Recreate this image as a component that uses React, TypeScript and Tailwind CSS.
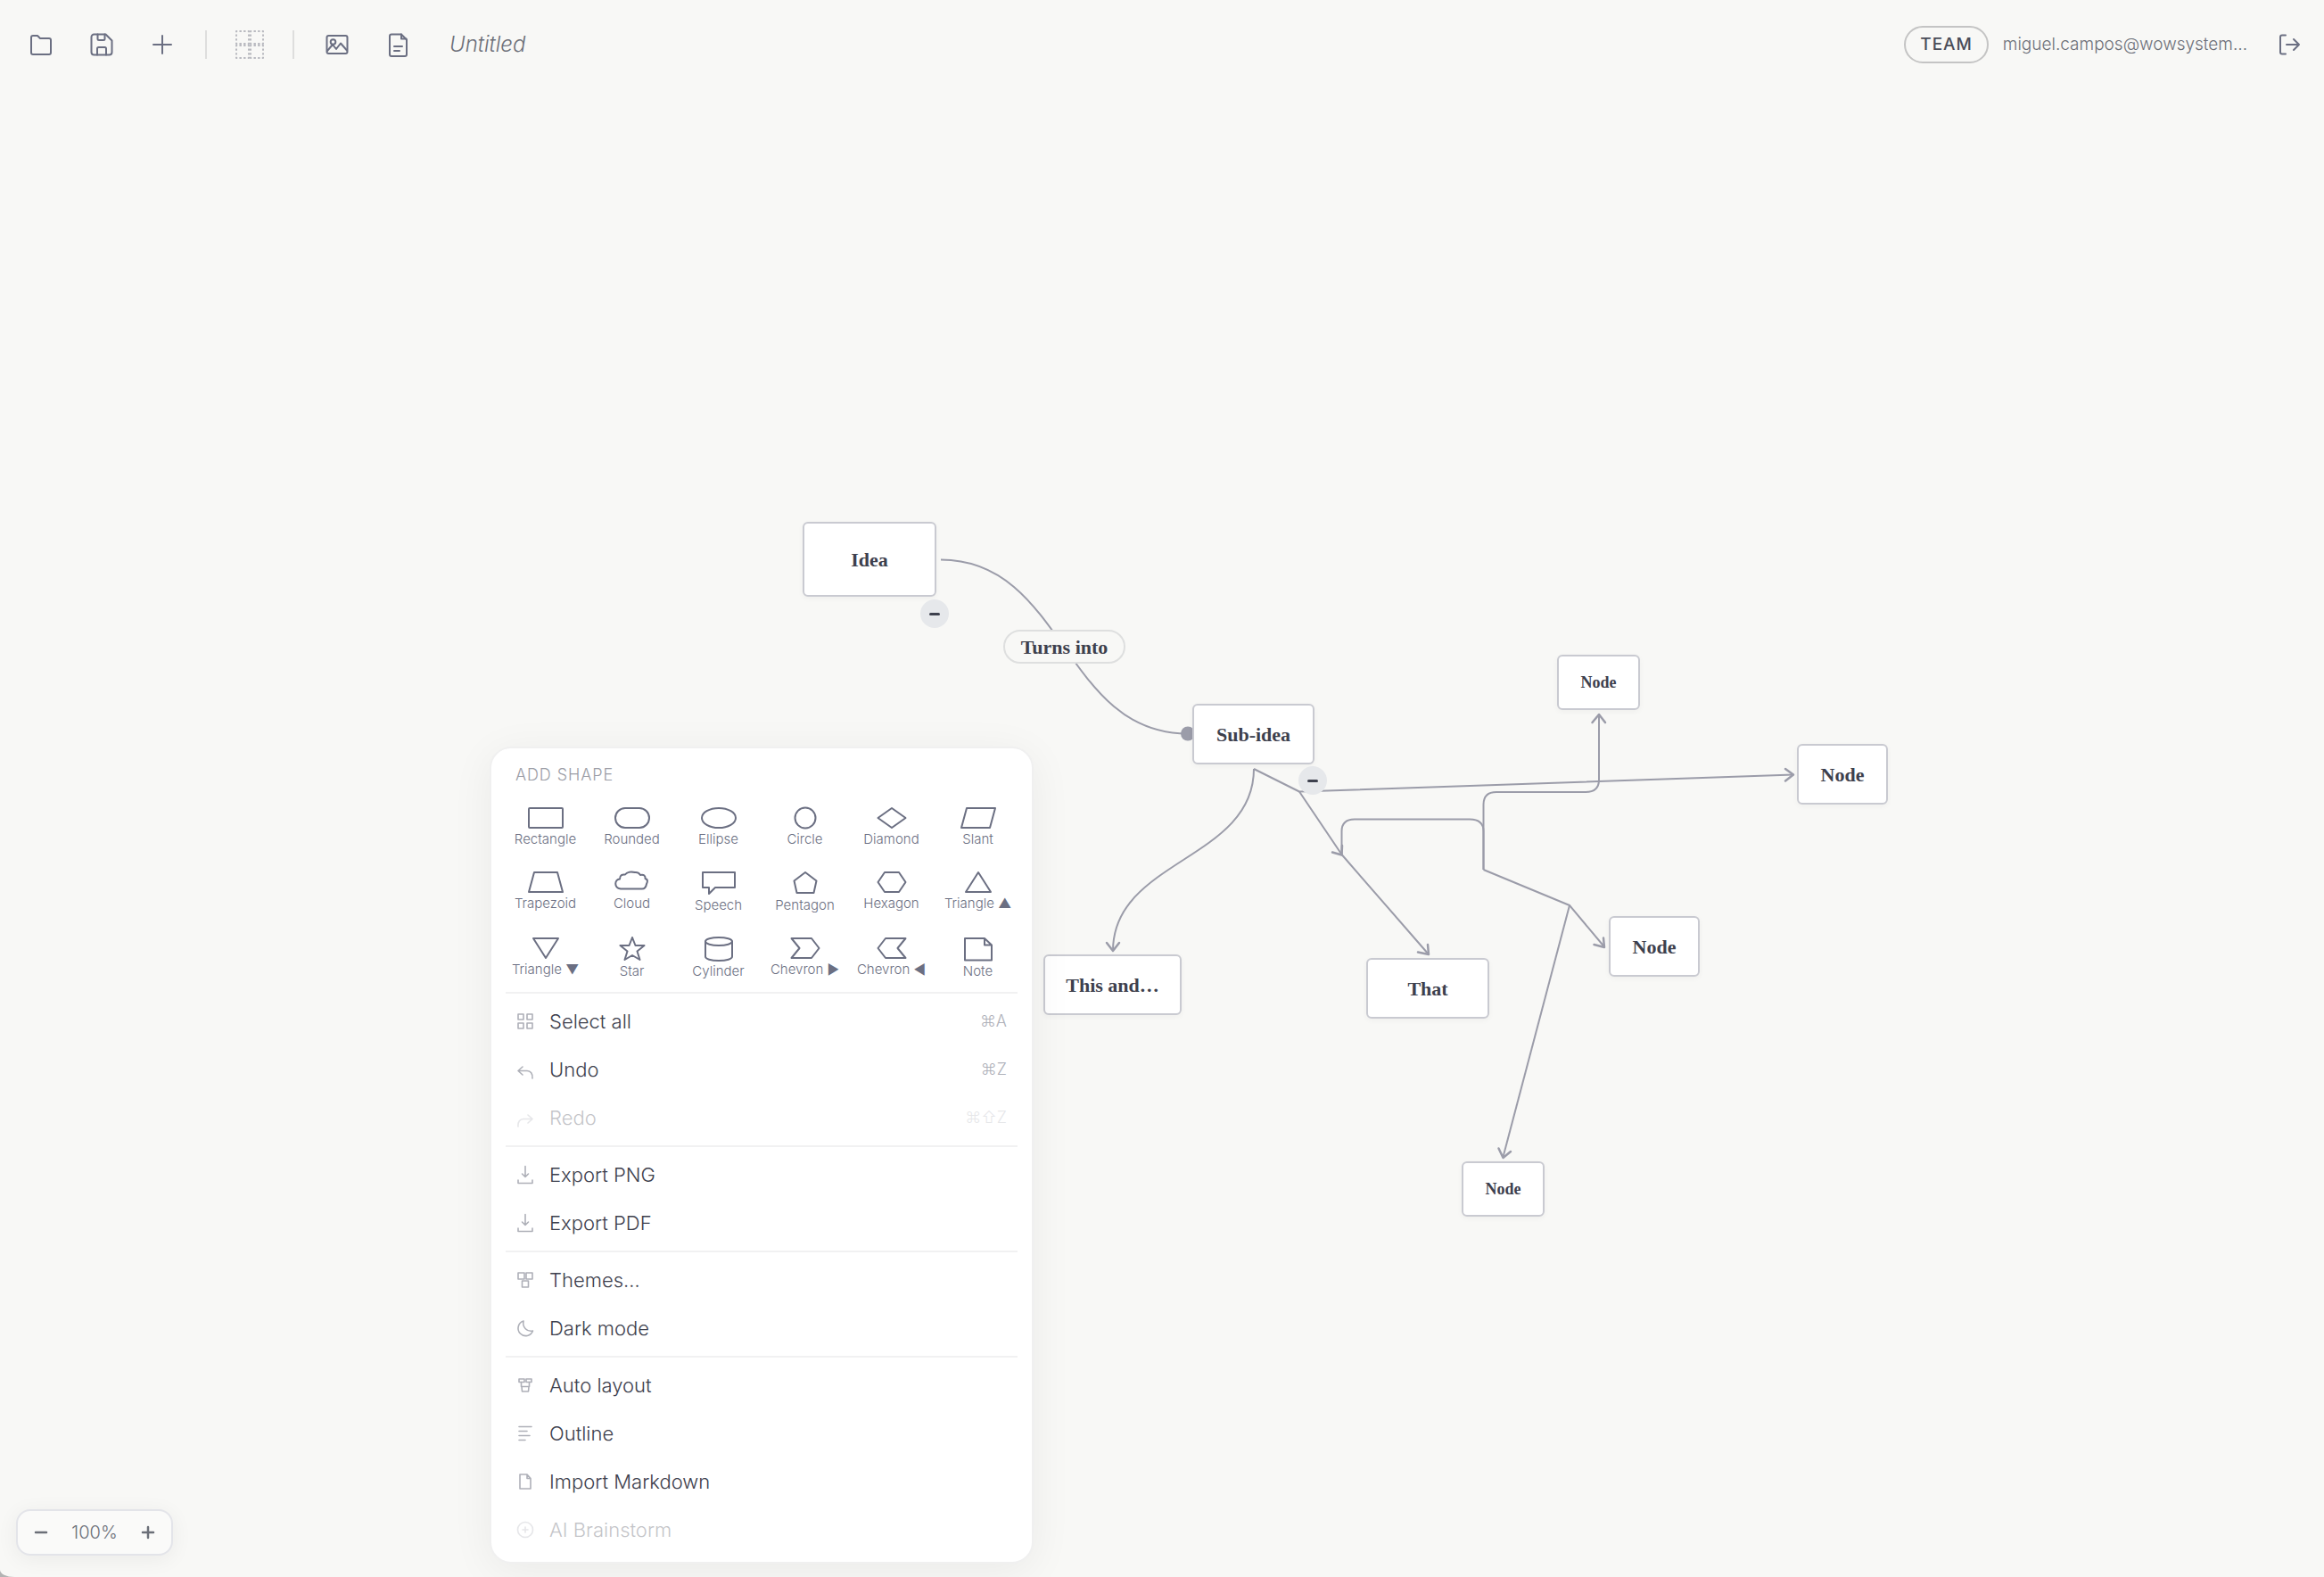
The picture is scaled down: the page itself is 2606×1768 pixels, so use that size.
import type { ReactNode } from 'react';

type IconProps = { w?: number; h?: number; sw?: number; children: ReactNode };

function Icon({ w = 32, h = 32, sw = 2, children }: IconProps) {
  return (
    <svg
      width={w}
      height={h}
      viewBox={`0 0 ${w} ${h}`}
      fill="none"
      stroke="currentColor"
      strokeWidth={sw}
      strokeLinecap="round"
      strokeLinejoin="round"
      aria-hidden="true"
    >
      {children}
    </svg>
  );
}

/* ---------- Toolbar ---------- */

const fileTools = [
  {
    label: 'Open',
    icon: <path d="M5 8a2 2 0 0 1 2-2h5l3 3h10a2 2 0 0 1 2 2v14a2 2 0 0 1-2 2H7a2 2 0 0 1-2-2z" />,
  },
  {
    label: 'Save',
    icon: (
      <>
        <path d="M7.500 4.500H20.500L27.500 11.500V24.500a3 3 0 0 1-3 3H7.500a3 3 0 0 1-3-3V7.500a3 3 0 0 1 3-3z" />
        <path d="M11.500 4.500v5a1.500 1.500 0 0 0 1.500 1.500h5a1.500 1.500 0 0 0 1.500-1.500v-5" />
        <path d="M11 27.500v-7a1.500 1.500 0 0 1 1.500-1.500h7a1.500 1.500 0 0 1 1.500 1.500v7" />
      </>
    ),
  },
  { label: 'Add', icon: <path d="M16 6v20M6 16h20" /> },
];

const exportTools = [
  {
    label: 'Export image',
    icon: (
      <>
        <rect x="4.500" y="6" width="23" height="20" rx="2" />
        <circle cx="11.500" cy="13" r="2.800" />
        <path d="M5 23l6-7 4 5 5-6.500 7 8" />
      </>
    ),
  },
  {
    label: 'Export document',
    icon: (
      <>
        <path d="M9 4.500h11l6 6V27a2 2 0 0 1-2 2H9a2 2 0 0 1-2-2V6.500a2 2 0 0 1 2-2z" />
        <path d="M20 4.500v5h5.500M12 18h9M12 23h6" />
      </>
    ),
  },
];

function ToolButton({ label, children }: { label: string; children: ReactNode }) {
  return (
    <button
      type="button"
      aria-label={label}
      className="flex size-[60px] items-center justify-center rounded-xl text-[#6b6f82]"
    >
      {children}
    </button>
  );
}

function Divider() {
  return <div className="mx-[10px] h-8 w-0.5 bg-[#dededd]" />;
}

function Toolbar() {
  return (
    <header className="relative flex h-[100px] items-center justify-between pr-2 pl-4">
      <div className="flex items-center gap-2">
        {fileTools.map((t) => (
          <ToolButton key={t.label} label={t.label}>
            <Icon>{t.icon}</Icon>
          </ToolButton>
        ))}
        <Divider />
        <button
          type="button"
          aria-label="Group"
          className="flex size-[60px] items-center justify-center text-[#b9bac0]"
        >
          <Icon>
            <g strokeDasharray="2.4 2.267" strokeDashoffset="1.2" strokeLinecap="butt">
              <rect x="1" y="1" width="14" height="14" />
              <rect x="17" y="1" width="14" height="14" />
              <rect x="1" y="17" width="14" height="14" />
              <rect x="17" y="17" width="14" height="14" />
            </g>
          </Icon>
        </button>
        <Divider />
        {exportTools.map((t) => (
          <ToolButton key={t.label} label={t.label}>
            <Icon>{t.icon}</Icon>
          </ToolButton>
        ))}
        <input
          aria-label="Document title"
          defaultValue="Untitled"
          className="ml-5 w-[86px] bg-transparent text-2xl font-light text-[#6d7079] italic outline-none"
        />
      </div>

      <div className="flex items-center">
        <span className="flex h-[42px] items-center rounded-full border-2 border-[#c4c4c4] px-4 text-[19px] font-medium tracking-wider text-[#4a4d59]">
          TEAM
        </span>
        <span className="ml-4 text-[19px] font-light text-[#6d7079]">miguel.campos@wowsystem…</span>
        <button
          type="button"
          aria-label="Sign out"
          className="ml-[18px] flex size-[60px] items-center justify-center text-[#6b6f82]"
        >
          <Icon>
            <path d="M11 5.500H7a2 2 0 0 0-2 2v17a2 2 0 0 0 2 2h4M12 16h14M20 10l6 6-6 6" />
          </Icon>
        </button>
      </div>
    </header>
  );
}

/* ---------- Diagram ---------- */

const nodes = [
  { id: 'idea', text: 'Idea', box: 'left-[900px] top-[585px] h-[84px] w-[150px] text-[22px]' },
  { id: 'sub', text: 'Sub-idea', box: 'left-[1337px] top-[789px] h-[68px] w-[137px] text-[22px]' },
  { id: 'this', text: 'This and…', box: 'left-[1170px] top-[1070px] h-[68px] w-[155px] text-[22px]' },
  { id: 'that', text: 'That', box: 'left-[1532px] top-[1074px] h-[68px] w-[138px] text-[22px]' },
  { id: 'n1', text: 'Node', box: 'left-[1746px] top-[734px] h-[62px] w-[93px] text-lg' },
  { id: 'n2', text: 'Node', box: 'left-[2015px] top-[834px] h-[68px] w-[102px] text-[22px]' },
  { id: 'n3', text: 'Node', box: 'left-[1804px] top-[1027px] h-[68px] w-[102px] text-[22px]' },
  { id: 'n4', text: 'Node', box: 'left-[1639px] top-[1302px] h-[62px] w-[93px] text-lg' },
];

const edges = [
  'M1055 627.500C1193 627.500 1193 822.500 1331 822.500',
  'M1406 862C1406 964 1248 964 1248 1066',
  'M1406 862L1457 887.500L2011 868.500',
  'M1457 887.500L1504.500 958L1602 1070',
  'M1504.500 958V932Q1504.500 918.500 1519 918.500H1648Q1663.500 918.500 1663.500 932V975',
  'M1663.500 975V902Q1663.500 888 1678 888H1778Q1793 888 1793 874V802',
  'M1663.500 975L1760 1015L1799 1061.500',
  'M1760 1015L1685.500 1297',
];

const arrowHeads = [
  'M1241 1057L1248 1066L1255 1057',
  'M2002 862L2011 868.500L2002 875.500',
  'M1494 955.500L1504.500 958.500L1505 948',
  'M1590 1067.500L1602 1070L1601 1059',
  'M1785.500 810L1793 801L1800 810',
  'M1787.500 1059L1799 1062L1798 1051.500',
  'M1680.500 1287.500L1685.500 1298L1694 1291',
];

function Collapse({ place }: { place: string }) {
  return (
    <button
      type="button"
      aria-label="Collapse"
      className={`absolute flex size-8 items-center justify-center rounded-full bg-[#e6e8eb] ${place}`}
    >
      <span className="h-[3px] w-3 rounded-full bg-[#3d404d]" />
    </button>
  );
}

function Diagram() {
  return (
    <div className="absolute inset-0 font-['Liberation_Serif',serif] font-bold text-[#3d404d]">
      <svg className="absolute inset-0 h-full w-full" fill="none" stroke="#9b9ca9" strokeWidth="2">
        {edges.map((d) => (
          <path key={d} d={d} strokeLinejoin="round" />
        ))}
        {arrowHeads.map((d) => (
          <path key={d} d={d} strokeWidth="2.500" strokeLinecap="round" strokeLinejoin="round" />
        ))}
        <circle cx="1332" cy="822.500" r="8" fill="#9b9ca9" stroke="none" />
      </svg>
      {nodes.map((n) => (
        <div
          key={n.id}
          className={`absolute flex items-center justify-center rounded-md border-2 border-[#c9cad1] bg-white whitespace-nowrap shadow-[0_2px_6px_rgba(0,0,0,0.04)] ${n.box}`}
        >
          {n.text}
        </div>
      ))}
      <div className="absolute top-[706px] left-[1125px] flex h-[38px] w-[137px] items-center justify-center rounded-full border-2 border-[#dedfdf] bg-[#f8f8f6] text-[22px] whitespace-nowrap">
        Turns into
      </div>
      <Collapse place="left-[1032px] top-[672px]" />
      <Collapse place="left-[1456px] top-[859px]" />
    </div>
  );
}

/* ---------- Context menu ---------- */

const shapes: { label: string; tall?: boolean; icon: ReactNode }[] = [
  { label: 'Rectangle', icon: <rect x="1" y="2" width="38" height="22" rx="1" /> },
  { label: 'Rounded', icon: <rect x="1" y="2" width="38" height="22" rx="11" /> },
  { label: 'Ellipse', icon: <ellipse cx="20" cy="13" rx="19" ry="11" /> },
  { label: 'Circle', icon: <circle cx="20" cy="13" r="11.500" /> },
  { label: 'Diamond', icon: <path d="M20 2L35.500 13L20 24L4.500 13z" /> },
  { label: 'Slant', icon: <path d="M7 2h32l-6 22H1z" /> },
  { label: 'Trapezoid', icon: <path d="M7 2h26l6 22H1z" /> },
  {
    label: 'Cloud',
    icon: (
      <path d="M7 20.500C-1 19 0 10 6 9.500C6 5 9 4 12 4.500C14 1.500 19 1 23 2C27 1.500 28 3.500 29 5C33 4 35 6 34.500 9C38 10 37 13 36 15C35.500 18 34 20.500 31 20.500z" />
    ),
  },
  { label: 'Speech', tall: true, icon: <path d="M2 2h36v17H16l-7 7v-7H2z" /> },
  { label: 'Pentagon', tall: true, icon: <path d="M20 2L32.500 11.500L29.500 25H10.500L7.500 11.500z" /> },
  { label: 'Hexagon', icon: <path d="M12 2h16l7.500 11L28 24H12L4.500 13z" /> },
  { label: 'Triangle ▲', icon: <path d="M20 2L34 24H6z" /> },
  { label: 'Triangle ▼', icon: <path d="M20 24L34 2H6z" /> },
  {
    label: 'Star',
    tall: true,
    icon: <path d="M20 1l3.500 9H33.500l-8 6.500L28.500 26L20 21L11.500 26L14.500 16.500L6.500 10H16.500z" />,
  },
  {
    label: 'Cylinder',
    tall: true,
    icon: (
      <>
        <ellipse cx="20" cy="5.500" rx="15" ry="4.500" />
        <path d="M5 5.500V22.500C5 25 11 27 20 27S35 25 35 22.500V5.500" />
      </>
    ),
  },
  { label: 'Chevron ▶', icon: <path d="M4.500 2H27L35.500 13L27 24H4.500L13.500 13z" /> },
  { label: 'Chevron ◀', icon: <path d="M35.500 2H13L4.500 13L13 24H35.500L26.500 13z" /> },
  {
    label: 'Note',
    tall: true,
    icon: <path d="M5 2H27L35 9.500V26.500H5zM27 2v7.500h8" />,
  },
];

type Item = { label: string; keys?: string; disabled?: boolean; icon: ReactNode };

const download = <path d="M11 1.500v12M7.500 10l3.500 3.500 3.500-3.500M3 17v3.500h16V17" />;

const groups: Item[][] = [
  [
    {
      label: 'Select all',
      keys: '⌘A',
      icon: (
        <>
          <rect x="3" y="3" width="6" height="6" />
          <rect x="13" y="3" width="6" height="6" />
          <rect x="3" y="13" width="6" height="6" />
          <rect x="13" y="13" width="6" height="6" />
        </>
      ),
    },
    { label: 'Undo', keys: '⌘Z', icon: <path d="M8 8L3 12.500l5 4.500M3 12.500h10c4 0 6.500 3 6 8.500" /> },
    {
      label: 'Redo',
      keys: '⌘⇧Z',
      disabled: true,
      icon: <path d="M14 8l5 4.500-5 4.500M19 12.500H9c-4 0-6.500 3-6 8.500" />,
    },
  ],
  [
    { label: 'Export PNG', icon: download },
    { label: 'Export PDF', icon: download },
  ],
  [
    {
      label: 'Themes…',
      icon: (
        <>
          <rect x="3" y="3" width="7" height="7" />
          <rect x="12" y="3" width="7" height="7" />
          <rect x="7.500" y="12" width="7" height="7" />
        </>
      ),
    },
    { label: 'Dark mode', icon: <path d="M9 3A8.500 8.500 0 1 0 19.500 14C13 15.500 7.500 10 9 3z" /> },
  ],
  [
    {
      label: 'Auto layout',
      icon: (
        <>
          <rect x="4" y="4" width="6" height="3.500" />
          <rect x="12" y="4" width="6" height="3.500" />
          <path d="M6.500 7.500v5M15.500 7.500v5M7 12.500h8l-.5 5.500h-7z" />
        </>
      ),
    },
    { label: 'Outline', icon: <path d="M4 3.500h14M4 8.500h9M4 13.500h12M4 18.500h7" /> },
    { label: 'Import Markdown', icon: <path d="M5 3h8l4 4.500V19H5zM13 3v4.500h4" /> },
    {
      label: 'AI Brainstorm',
      disabled: true,
      icon: (
        <>
          <circle cx="11" cy="11" r="8.500" />
          <path d="M11 8v6M8 11h6" />
        </>
      ),
    },
  ],
];

function MenuItem({ item }: { item: Item }) {
  return (
    <button
      type="button"
      role="menuitem"
      disabled={item.disabled}
      className="flex h-[54px] items-center gap-4 pr-7 pl-[27px] text-left text-[22px] font-light text-[#3d404d] disabled:opacity-30"
    >
      <span className="text-[#aeb0b8]">
        <Icon w={22} h={22} sw={1.6}>
          {item.icon}
        </Icon>
      </span>
      <span className="flex-1">{item.label}</span>
      {item.keys && <span className="text-lg text-[#b0b2ba]">{item.keys}</span>}
    </button>
  );
}

function ContextMenu() {
  return (
    <div
      role="menu"
      className="absolute top-[837px] left-[549px] flex w-[610px] flex-col rounded-3xl border-2 border-[#f0f0f0] bg-white pb-[9px] shadow-[0_8px_48px_rgba(0,0,0,0.06)]"
    >
      <h2 className="mb-[10px] pt-[17px] pl-[27px] text-lg leading-[26px] font-light tracking-wider text-[#9b9da6]">
        ADD SHAPE
      </h2>
      <div className="grid grid-cols-6 px-3">
        {shapes.map((s) => (
          <button
            key={s.label}
            type="button"
            className="flex flex-col items-center gap-0.5 pt-3 pb-[14px] text-[15px] leading-[18px] font-light whitespace-nowrap text-[#6b6f82]"
          >
            <Icon w={40} h={s.tall ? 28 : 26}>
              {s.icon}
            </Icon>
            {s.label}
          </button>
        ))}
      </div>
      {groups.map((group, i) => (
        <div key={group[0].label} className="flex flex-col">
          <hr className={`mx-4 mb-1 h-0.5 border-0 bg-[#f1f1f2] ${i > 0 ? 'mt-1' : ''}`} />
          {group.map((item) => (
            <MenuItem key={item.label} item={item} />
          ))}
        </div>
      ))}
    </div>
  );
}

function ZoomControl() {
  return (
    <div className="absolute bottom-6 left-[18px] flex h-[52px] w-[176px] items-center justify-between rounded-2xl border-2 border-[#e3e4e9] bg-[#fafaf9] px-3 text-[#6b6f78] shadow-[0_4px_24px_rgba(0,0,0,0.06)]">
      <button type="button" aria-label="Zoom out">
        <Icon w={28} h={28} sw={2.5}>
          <path d="M8 14h12" />
        </Icon>
      </button>
      <span className="text-xl font-light">100%</span>
      <button type="button" aria-label="Zoom in">
        <Icon w={28} h={28} sw={2.5}>
          <path d="M8 14h12M14 8v12" />
        </Icon>
      </button>
    </div>
  );
}

export default function App() {
  return (
    <div className="bg-[#b3b3b3] font-[Inter,'DejaVu_Sans',sans-serif]">
      <div className="relative min-h-screen overflow-hidden rounded-bl-[16px_8px] bg-[#f8f8f6]">
        <Diagram />
        <Toolbar />
        <ContextMenu />
        <ZoomControl />
      </div>
    </div>
  );
}
